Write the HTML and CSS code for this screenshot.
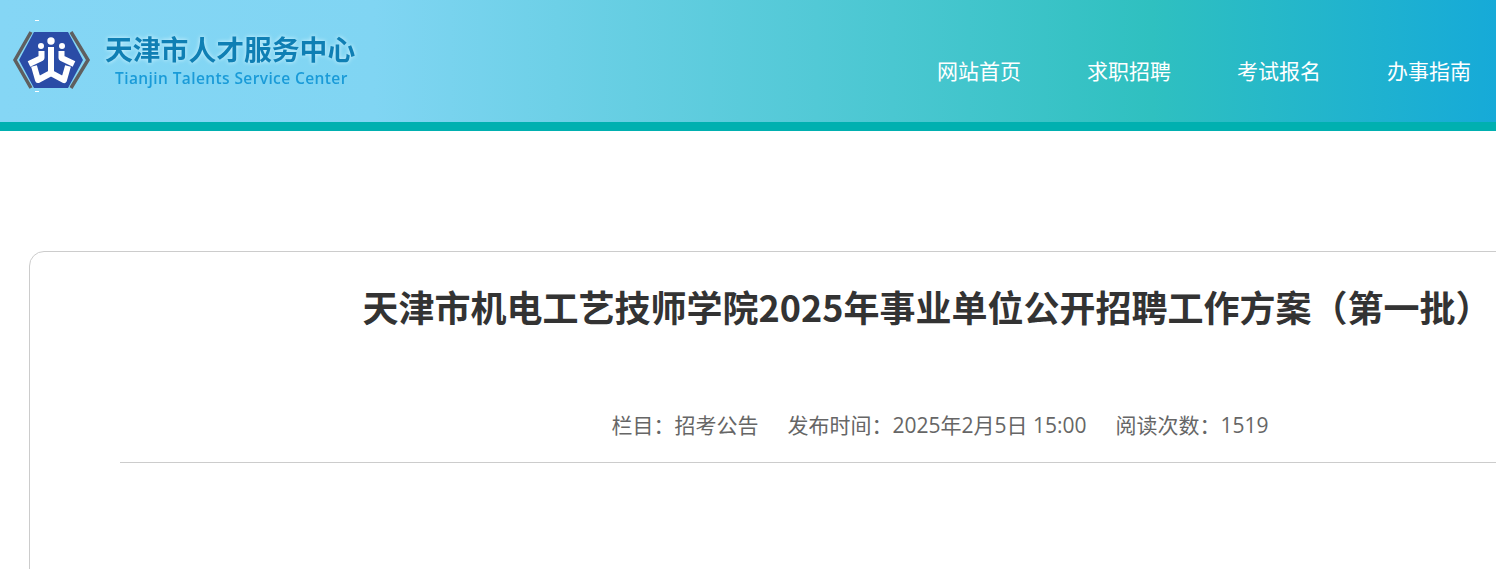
FILE: index.html
```html
<!DOCTYPE html>
<html lang="zh-CN">
<head>
    <meta charset="UTF-8">
    <meta name="viewport" content="width=device-width, initial-scale=1.0">
    <title>天津市机电工艺技师学院2025年事业单位公开招聘工作方案（第一批）</title>
    <link rel="stylesheet" href="styles.css">
</head>
<body>
    <header class="header">
        <a class="logo" href="#">
            <svg class="logo-mark" viewBox="0 0 100 90" width="100" height="90">
                <path d="M31 17 L15 45 L31 73" fill="none" stroke="#5f5f5f" stroke-width="3.5"/>
                <path d="M71 17 L88 45 L71 73" fill="none" stroke="#5f5f5f" stroke-width="3.5"/>
                <path d="M34 17 H68 L83 45 L68 73 H34 L19 45 Z" fill="#2a4ca6"/>
                <circle cx="51" cy="26" r="3.7" fill="#fff"/>
                <circle cx="41" cy="31" r="3" fill="#fff"/>
                <circle cx="62" cy="31" r="3" fill="#fff"/>
                <path d="M51 32 V58 M41.5 36 V43 L29 49 M61.5 36 V43 L74 49 M34 51 L38 65 L51 58 L64 65 L68 51" fill="none" stroke="#fff" stroke-width="6" stroke-linejoin="round"/>
                <rect x="35" y="5" width="4" height="1" fill="#fff"/>
                <rect x="35" y="76" width="4" height="1" fill="#fff"/>
            </svg>
            <div class="logo-text">
                <div class="logo-cn">天津市人才服务中心</div>
                <div class="logo-en">Tianjin Talents Service Center</div>
            </div>
        </a>
        <nav class="nav">
            <a href="#">网站首页</a>
            <a href="#">求职招聘</a>
            <a href="#">考试报名</a>
            <a href="#">办事指南</a>
        </nav>
    </header>

    <div class="main">
        <div class="card">
            <h1 class="title">天津市机电工艺技师学院2025年事业单位公开招聘工作方案（第一批）</h1>
            <div class="meta">
                <span>栏目：招考公告</span>
                <span>发布时间：2025年2月5日 15:00</span>
                <span>阅读次数：1519</span>
            </div>
        </div>
    </div>
</body>
</html>
```

FILE: styles.css
```css
html, body {
    margin: 0;
    padding: 0;
    height: 569px;
    overflow: hidden;
    background: white;
    font-family: "Noto Sans CJK SC", "Noto Sans", sans-serif;
}
a {
    text-decoration: none;
}
.header {
    display: flex;
    justify-content: space-between;
    height: 122px;
    border-bottom: 9px solid #00b0b0;
    background: linear-gradient(90deg, #85d6f5 0%, #80d5f3 25%, #2fc0c0 77%, #16aad8 100%);
}
.logo {
    display: flex;
    padding-top: 15px;
}
.logo-mark {
    flex: none;
    margin-right: 5px;
}
.logo-text {
    padding-top: 15px;
    filter: blur(0.4px);
}
.logo-cn {
    font-size: 27.8px;
    line-height: 36px;
    font-weight: 700;
    color: #0f7fb4;
    white-space: nowrap;
    text-shadow: 0 0 4px #d8f5ff;
}
.logo-en {
    margin: 2px 0 0 10px;
    font-family: "Open Sans", sans-serif;
    font-size: 15.5px;
    line-height: 20px;
    font-weight: 600;
    letter-spacing: 0.4px;
    color: #1a9bd8;
    white-space: nowrap;
}
.nav {
    display: flex;
    gap: 66px;
    padding: 51px 25px 0 0;
}
.nav a {
    font-size: 21px;
    line-height: 38px;
    color: white;
    white-space: nowrap;
}
.main {
    padding: 120px 0 0 29px;
}
.card {
    width: 1732px;
    height: 400px;
    box-sizing: border-box;
    padding: 0 0 0 90px;
    border: 1px solid #ccc;
    border-radius: 15px;
}
.title {
    margin: 26px 0 0;
    padding-right: 26px;
    font-size: 36px;
    line-height: 56px;
    font-weight: 700;
    color: #333;
    text-align: center;
    white-space: nowrap;
}
.meta {
    display: flex;
    justify-content: center;
    gap: 29px;
    margin-top: 73px;
    padding-bottom: 19px;
    border-bottom: 1px solid #ccc;
    font-family: "Open Sans", "Noto Sans CJK SC", sans-serif;
    font-size: 21px;
    line-height: 36px;
    color: #666;
    white-space: nowrap;
}
```
